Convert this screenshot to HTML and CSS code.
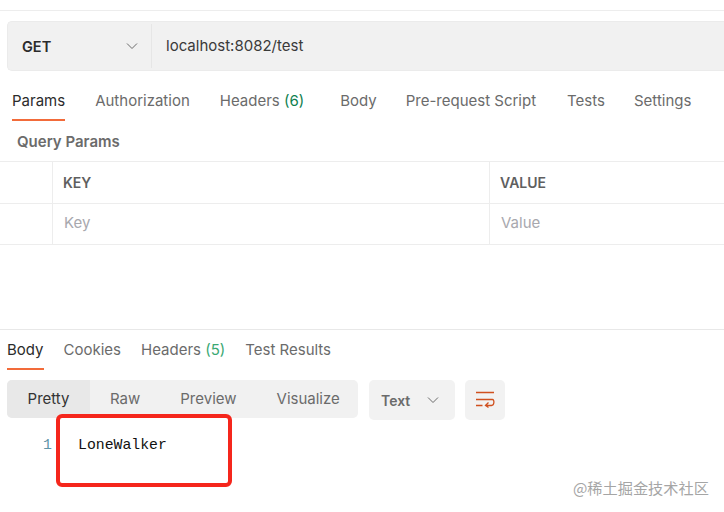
FILE: index.html
```html
<!DOCTYPE html>
<html lang="en">
<head>
<meta charset="utf-8">
<title>Request</title>
<link rel="stylesheet" href="styles.css">
</head>
<body>
<div class="app">
  <div class="url-row">
    <div class="url-bar">
      <div class="method"><span>GET</span>
        <svg class="chev" width="12" height="12" viewBox="0 0 12 12"><path d="M1 3.500 6 8.500 11 3.500" fill="none" stroke="#6b6b6b" stroke-width="1"/></svg>
      </div>
      <div class="url">localhost:8082/test</div>
    </div>
  </div>
  <nav class="req-tabs">
    <span class="tab active t-params">Params</span>
    <span class="tab t-auth">Authorization</span>
    <span class="tab t-head">Headers <em>(6)</em></span>
    <span class="tab t-body">Body</span>
    <span class="tab t-pre">Pre-request Script</span>
    <span class="tab t-tests">Tests</span>
    <span class="tab t-set">Settings</span>
  </nav>
  <div class="qp">Query Params</div>
  <div class="table">
    <div class="tr head"><div class="c0"></div><div class="c1">KEY</div><div class="c2">VALUE</div></div>
    <div class="tr ph"><div class="c0"></div><div class="c1">Key</div><div class="c2">Value</div></div>
  </div>
  <section class="response">
    <nav class="res-tabs">
      <span class="tab active">Body</span>
      <span class="tab">Cookies</span>
      <span class="tab">Headers <em>(5)</em></span>
      <span class="tab">Test Results</span>
    </nav>
    <div class="toolbar">
      <div class="seg">
        <span class="seg-i on">Pretty</span>
        <span class="seg-i i-raw">Raw</span>
        <span class="seg-i i-pre">Preview</span>
        <span class="seg-i i-vis">Visualize</span>
      </div>
      <div class="fmt"><span>Text</span>
        <svg width="12" height="12" viewBox="0 0 12 12"><path d="M1 3.500 6 8.500 11 3.500" fill="none" stroke="#6b6b6b" stroke-width="1"/></svg>
      </div>
      <div class="wrap-btn">
        <svg width="20" height="18" viewBox="0 0 20 18"><path d="M1 1.500H19M1 8.500H17.500C19.500 8.500 19.500 14.500 16.500 14.500H11M13.500 11.500 10.500 14.500 13.500 16.500M1 14.500H7.500" fill="none" stroke="#d0501f" stroke-width="1.300"/></svg>
      </div>
    </div>
    <div class="code"><span class="ln">1</span><span class="src">LoneWalker</span></div>
  </section>
  <div class="mark"></div>
  <div class="wm">@稀土掘金技术社区</div>
</div>
</body>
</html>
```
FILE: styles.css
```css
* { box-sizing: border-box; }
html, body { margin: 0; padding: 0; background: #fff; }
body { width: 724px; height: 512px; overflow: hidden; font-family: Inter, "Liberation Sans", sans-serif; font-size: 15px; color: #6b6b6b; }
.app { position: relative; width: 724px; height: 512px; overflow: hidden; padding-top: 10px; }
.url-row { border-top: 1px solid #ededed; padding: 10px 0 0 7px; }
.url-bar { display: flex; height: 50px; background: #f1f1f1; border: 1px solid #ebebeb; border-right: 0; border-radius: 5px 0 0 5px; }
.method { width: 144px; display: flex; align-items: center; justify-content: space-between; padding: 0 13px 0 14px; border-right: 1px solid #e6e6e6; margin: 2px 0; font-weight: 600; font-size: 14.5px; color: #2b2b2b; }
.url { display: flex; align-items: center; padding: 0 0 1px 14px; color: #3a3a3a; }
.req-tabs { display: flex; height: 50px; padding-left: 12px; align-items: flex-start; }
.tab { display: block; white-space: nowrap; }
.tab em { font-style: normal; color: #0f7f50; }
.req-tabs .tab { padding-top: 21px; height: 50px; line-height: 18px; }
.req-tabs .active, .res-tabs .active { color: #2b2b2b; position: relative; }
.req-tabs .active::after, .res-tabs .active::after { content: ""; position: absolute; left: 0; right: 0; bottom: 0; height: 2.500px; background: #f26b3a; }
.t-auth { margin-left: 30px; }
.t-head { margin-left: 30px; }
.t-body { margin-left: 36px; }
.t-pre { margin-left: 29px; }
.t-tests { margin-left: 31px; }
.t-set { margin-left: 29px; }
.qp { height: 40px; padding: 12px 0 0 17px; font-weight: 600; line-height: 18px; color: #6b6b6b; }
.table { border-top: 1px solid #ededed; }
.tr { display: grid; grid-template-columns: 52px 437px 1fr; border-bottom: 1px solid #ededed; height: 42px; }
.tr > div { display: flex; align-items: center; padding-left: 11px; border-left: 1px solid #ededed; }
.tr > .c0 { border-left: 0; padding: 0; }
.head .c1, .head .c2 { font-weight: 600; font-size: 14px; color: #5f5f5f; padding-left: 10px; }
.ph { height: 41px; color: #a8a8ae; }
.ph > div { padding-bottom: 3px; }
.response { margin-top: 84px; border-top: 1px solid #e8e8e8; }
.res-tabs { display: flex; gap: 20px; height: 40px; padding-left: 7px; }
.res-tabs .tab { padding-top: 11px; line-height: 18px; height: 40px; }
.res-tabs em { font-style: normal; color: #3aa873; }
.toolbar { display: flex; margin: 10px 0 0 7px; align-items: flex-start; }
.seg { display: flex; width: 351px; height: 38px; background: #f1f1f1; border-radius: 5px; overflow: hidden; }
.seg-i { display: flex; align-items: center; height: 38px; padding-bottom: 2px; }
.on { width: 83px; justify-content: center; background: #e8e8e8; color: #333; }
.i-raw { margin-left: 20px; }
.i-pre { margin-left: 40px; }
.i-vis { margin-left: 40px; }
.fmt { width: 86px; height: 40px; margin-left: 11px; background: #f2f2f2; border-radius: 5px; display: flex; align-items: center; justify-content: space-between; padding: 0 16px 0 12px; font-weight: 600; font-size: 14px; }
.wrap-btn { width: 40px; height: 40px; margin-left: 10px; background: #f2f2f2; border-radius: 5px; display: flex; align-items: center; justify-content: center; }
.code { display: flex; align-items: center; margin-top: 14px; height: 22px; font-family: "Liberation Mono", monospace; font-size: 14.800px; }
.ln { width: 52px; text-align: right; color: #5f94a8; }
.src { margin-left: 26px; color: #111; }
.mark { position: absolute; left: 56px; top: 414px; width: 176px; height: 73px; border: 4px solid #f5261c; border-radius: 6px; }
.wm { position: absolute; left: 573px; top: 478px; font-family: "Noto Sans CJK SC", sans-serif; font-size: 15.200px; line-height: 18px; color: #a5a5a5; white-space: nowrap; }
```
